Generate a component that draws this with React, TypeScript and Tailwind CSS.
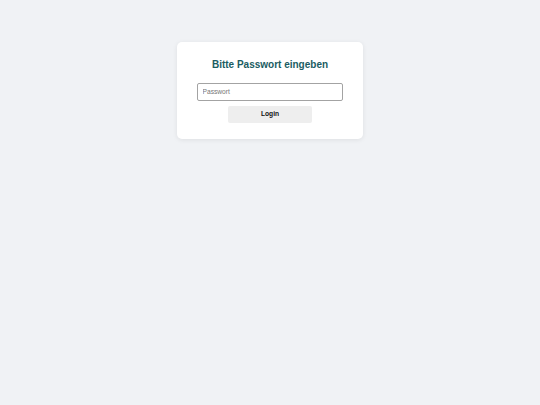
import React, { useState } from 'react';

const App: React.FC = () => {
  const [password, setPassword] = useState('');

  const handleSubmit = (e: React.FormEvent) => {
    e.preventDefault();
  };

  return (
    <div
      className="min-h-[405px] w-full bg-[#f0f2f5] flex flex-col items-center pt-[42px]"
      style={{ fontFamily: '"Liberation Sans", Arial, sans-serif' }}
    >
      <form
        onSubmit={handleSubmit}
        className="w-[186px] h-[97px] bg-white rounded-[5px] shadow-[0_1px_5px_rgba(0,0,0,0.08)] flex flex-col items-center pt-[17px]"
      >
        <h2 className="text-[10px] leading-[11.5px] font-bold text-[#1a5c62]">
          Bitte Passwort eingeben
        </h2>
        <input
          type="password"
          value={password}
          onChange={(e) => setPassword(e.target.value)}
          placeholder="Passwort"
          className="mt-[12px] w-[146px] h-[18px] border border-[#a3a3a3] rounded-[2px] px-[4.5px] text-[6.67px] text-[#333] placeholder:text-[#767676] outline-none"
        />
        <button
          type="submit"
          className="mt-[5px] w-[84px] h-[17px] bg-[#eeeeee] rounded-[2px] text-[6.67px] font-bold text-[#111]"
        >
          Login
        </button>
      </form>
    </div>
  );
};

export default App;
